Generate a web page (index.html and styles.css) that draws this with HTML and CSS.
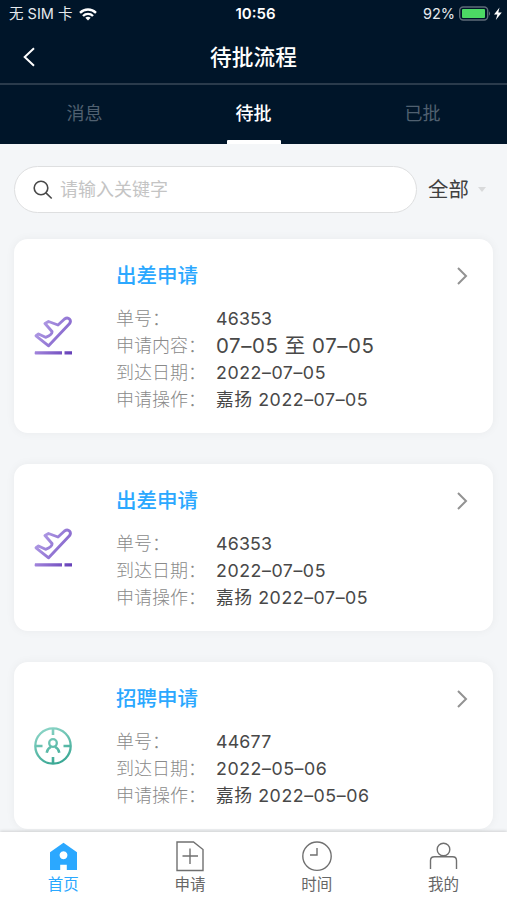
FILE: index.html
```
<!DOCTYPE html>
<html lang="zh-CN">
<head>
    <meta charset="UTF-8">
    <meta name="viewport" content="width=device-width, initial-scale=1.0">
    <title>待批流程</title>
    <link rel="stylesheet" href="styles.css">
</head>
<body>
    <!-- shared gradients and icons -->
    <svg class="defs" width="0" height="0">
        <defs>
            <linearGradient id="purple" x1="0" y1="0" x2="1" y2="0.6">
                <stop offset="0" stop-color="#baa8ea"/>
                <stop offset="1" stop-color="#8362cb"/>
            </linearGradient>
            <linearGradient id="purple-line" gradientUnits="userSpaceOnUse" x1="0" y1="0" x2="38" y2="0">
                <stop offset="0" stop-color="#a285dc"/>
                <stop offset="1" stop-color="#6540b8"/>
            </linearGradient>
            <linearGradient id="green" gradientUnits="userSpaceOnUse" x1="10" y1="0" x2="24" y2="38">
                <stop offset="0" stop-color="#8ed6c8"/>
                <stop offset="1" stop-color="#37a692"/>
            </linearGradient>
            <symbol id="plane" viewBox="0 0 38 40">
                <path d="M2 19.8 L4.5 18 L11.5 21.3 Q18.5 18.5 18 15.5 L11 7.5 L14.5 5.5 L24 9 L30.5 3 C34.5 .2 38 4.4 35.4 7.8 L14.6 29.8 Z" fill="none" stroke="url(#purple)" stroke-width="2.9" stroke-linejoin="round"/>
                <path d="M1 35.2h27v3.2H1.5Q0 38.4 1 35.2z M30.5 35.2h7.5v3.2h-7.5z" fill="url(#purple-line)"/>
            </symbol>
            <symbol id="target" viewBox="0 0 38 38">
                <g fill="none" stroke="url(#green)" stroke-width="2.3">
                    <circle cx="19" cy="19" r="17.7"/>
                    <path d="M19 2v6 M19 30v6 M2 19.01h6.5 M29.5 19.01h6.5" stroke-width="2.6"/>
                    <circle cx="19" cy="16" r="3.8"/>
                    <path d="M12.7 25.7c.6-3 2.3-5 4.5-6 M25.3 25.7c-.6-3-2.3-5-4.5-6" stroke-width="2.5"/>
                </g>
            </symbol>
        </defs>
    </svg>

    <div class="app">
        <header class="header">
            <div class="status-bar">
                <div class="status-left">
                    <span>无 SIM 卡</span>
                    <svg width="18" height="13" viewBox="0 0 18 13" fill="none" stroke="#fff" stroke-width="2.4">
                        <path d="M1 4.8C5.5.4 12.5.4 17 4.8"/>
                        <path d="M4 8C6.8 5.2 11.2 5.2 14 8"/>
                        <path d="M6.3 9.7Q9 7.7 11.7 9.7L9 12.6z" fill="#fff" stroke="none"/>
                    </svg>
                </div>
                <div class="status-time">10:56</div>
                <div class="status-right">
                    <span>92%</span>
                    <svg width="43" height="16" viewBox="0 0 43 16">
                        <rect x="0.7" y="1" width="28" height="13" rx="3.5" fill="none" stroke="#5d6b78" stroke-width="1.4"/>
                        <rect x="3" y="3" width="23" height="9" rx="1" fill="#4cd964"/>
                        <path d="M30 5.2q2.2 2.3 0 4.6z" fill="#5d6b78"/>
                        <path d="M40.5 1.5L35 8.4h3.4L36.8 14l6-7.4h-3.5z" fill="#fff"/>
                    </svg>
                </div>
            </div>
            <div class="nav-bar">
                <svg class="back" width="14" height="20" viewBox="0 0 14 20" fill="none" stroke="#fff" stroke-width="2">
                    <path d="M12 1.2L2.7 10L12 18.8"/>
                </svg>
                <h1>待批流程</h1>
            </div>
            <div class="tabs">
                <div class="tab">消息</div>
                <div class="tab active">待批</div>
                <div class="tab">已批</div>
            </div>
        </header>

        <main class="content">
            <div class="search-row">
                <div class="search-box">
                    <svg width="20" height="20" viewBox="0 0 20 20" fill="none" stroke="#484848" stroke-width="1.6">
                        <circle cx="8" cy="8" r="6.8"/>
                        <path d="M12.7 12.7l6 5.8"/>
                    </svg>
                    <span>请输入关键字</span>
                </div>
                <div class="filter">全部<i class="caret"></i></div>
            </div>

            <div class="card">
                <svg class="card-icon" width="38" height="40"><use href="#plane"/></svg>
                <div class="card-body">
                    <h2>出差申请</h2>
                    <div class="row"><span class="label">单号：</span><span class="value">46353</span></div>
                    <div class="row"><span class="label">申请内容：</span><span class="value large">07–05 至 07–05</span></div>
                    <div class="row"><span class="label">到达日期：</span><span class="value date">2022–07–05</span></div>
                    <div class="row"><span class="label">申请操作：</span><span class="value date">嘉扬 2022–07–05</span></div>
                </div>
                <svg class="arrow" width="12" height="20" viewBox="0 0 12 20"><path d="M2 2l8 8-8 8"/></svg>
            </div>

            <div class="card">
                <svg class="card-icon" width="38" height="40"><use href="#plane"/></svg>
                <div class="card-body">
                    <h2>出差申请</h2>
                    <div class="row"><span class="label">单号：</span><span class="value">46353</span></div>
                    <div class="row"><span class="label">到达日期：</span><span class="value date">2022–07–05</span></div>
                    <div class="row"><span class="label">申请操作：</span><span class="value date">嘉扬 2022–07–05</span></div>
                </div>
                <svg class="arrow" width="12" height="20" viewBox="0 0 12 20"><path d="M2 2l8 8-8 8"/></svg>
            </div>

            <div class="card">
                <svg class="card-icon" width="38" height="38"><use href="#target"/></svg>
                <div class="card-body">
                    <h2>招聘申请</h2>
                    <div class="row"><span class="label">单号：</span><span class="value">44677</span></div>
                    <div class="row"><span class="label">到达日期：</span><span class="value date">2022–05–06</span></div>
                    <div class="row"><span class="label">申请操作：</span><span class="value date">嘉扬 2022–05–06</span></div>
                </div>
                <svg class="arrow" width="12" height="20" viewBox="0 0 12 20"><path d="M2 2l8 8-8 8"/></svg>
            </div>
        </main>

        <nav class="tab-bar">
            <a class="tab-item active">
                <svg width="30" height="32" viewBox="0 0 30 32">
                    <path fill-rule="evenodd" d="M15.5 1.8L29 11.3V29H18.8V23.7H12.2V29H2V11.3zM15.5 10.2a4 4 0 1 0 .01 0z" fill="#2ba8ff"/>
                </svg>
                <span>首页</span>
            </a>
            <a class="tab-item">
                <svg class="line" width="30" height="32" viewBox="0 0 30 32">
                    <path d="M2 1H18.5L28 8.5V29.5H2z M15 7.5V23 M7.5 15H23"/>
                </svg>
                <span>申请</span>
            </a>
            <a class="tab-item">
                <svg class="line" width="30" height="32" viewBox="0 0 30 32">
                    <circle cx="15" cy="15.2" r="14.2"/>
                    <path d="M15 7V14H8"/>
                </svg>
                <span>时间</span>
            </a>
            <a class="tab-item">
                <svg class="line" width="30" height="32" viewBox="0 0 30 32">
                    <circle cx="14.5" cy="8.5" r="6.3"/>
                    <path d="M1.5 28V19.5Q1.5 15.8 5.5 15.8H23.5Q27.5 15.8 27.5 19.5V28"/>
                </svg>
                <span>我的</span>
            </a>
        </nav>
    </div>
</body>
</html>
```
FILE: styles.css
```
* {
    margin: 0;
    padding: 0;
    box-sizing: border-box;
}
body {
    font-family: Inter, "Noto Sans CJK SC", sans-serif;
    background-color: #f4f6f8;
    overflow: hidden;
}
svg {
    display: block;
    flex-shrink: 0;
}
.defs {
    position: absolute;
}
.app {
    height: 900px;
    display: flex;
    flex-direction: column;
}
.header {
    height: 144px;
    flex-shrink: 0;
    background-color: #001529;
    color: #fff;
}
.status-bar {
    height: 28px;
    display: grid;
    grid-template-columns: 1fr 60px 1fr;
    align-items: center;
    padding: 0 5px 0 9px;
    font-size: 14.5px;
    line-height: 28px;
    color: #e6eaee;
}
.status-left, .status-right {
    display: flex;
    align-items: center;
    gap: 7px;
}
.status-right {
    justify-content: flex-end;
    gap: 4px;
}
.status-time {
    text-align: center;
    font-weight: 600;
    font-size: 15px;
    color: #fff;
}
.nav-bar {
    height: 57px;
    display: grid;
    grid-template-columns: 60px 1fr 60px;
    align-items: center;
    padding-top: 3px;
    border-bottom: 2px solid #2a3b4c;
}
.back {
    margin-left: 22px;
}
.nav-bar h1 {
    font-size: 21.7px;
    font-weight: 500;
    line-height: 51px;
    text-align: center;
}
.tabs {
    height: 59px;
    display: grid;
    grid-template-columns: repeat(3, 1fr);
}
.tab {
    display: flex;
    flex-direction: column;
    align-items: center;
    justify-content: space-between;
    padding-top: 3px;
    font-size: 18px;
    line-height: 52px;
    color: #506070;
}
.tab.active {
    color: #fff;
    font-weight: 500;
}
.tab.active::after {
    content: "";
    width: 54px;
    height: 4px;
    border-radius: 1px 1px 0 0;
    background-color: #fff;
}
.content {
    flex: 1;
    min-height: 0;
    padding: 22px 14px 0;
    overflow: hidden;
}
.search-row {
    display: flex;
    align-items: center;
    margin-bottom: 26px;
}
.search-box {
    width: 403px;
    height: 47px;
    display: flex;
    align-items: center;
    gap: 7px;
    padding-left: 18px;
    border: 1px solid #dedfe0;
    border-radius: 24px;
    background-color: #fff;
    font-size: 18px;
    line-height: 26px;
    color: #c4c4c4;
}
.filter {
    display: flex;
    align-items: center;
    gap: 9px;
    margin-left: 11px;
    font-size: 20.4px;
    line-height: 47px;
    color: #404040;
}
.caret {
    border: 4px solid transparent;
    border-top: 5px solid #d9dadb;
    border-bottom: 0;
}
.card {
    display: flex;
    align-items: flex-start;
    margin-bottom: 31px;
    padding: 20px 25px 20px 20px;
    border-radius: 14px;
    background-color: #fff;
    box-shadow: 0 0 10px rgba(0, 0, 0, 0.05);
}
.card-icon {
    align-self: center;
}
.card-body {
    flex: 1;
    margin-left: 44px;
}
.card h2 {
    height: 33px;
    margin-bottom: 13px;
    font-size: 20.5px;
    font-weight: 500;
    line-height: 34px;
    color: #2ba8ff;
}
.card .row {
    display: flex;
    height: 27px;
    line-height: 27px;
    font-size: 18px;
}
.label {
    width: 100px;
    color: #8a8a8a;
    font-weight: 300;
    white-space: nowrap;
}
.value {
    color: #484848;
    font-size: 17.8px;
    letter-spacing: 0.2px;
}
.value.date {
    letter-spacing: 0.55px;
}
.value.large {
    font-size: 20.4px;
    letter-spacing: 0.6px;
    line-height: 28px;
}
.arrow {
    margin-top: 7px;
    fill: none;
    stroke: #929292;
    stroke-width: 2;
}
.tab-bar {
    height: 68px;
    flex-shrink: 0;
    display: grid;
    grid-template-columns: repeat(4, 1fr);
    background-color: #fff;
    box-shadow: 0 -1px 3px rgba(0, 0, 0, 0.15);
    position: relative;
}
.tab-item {
    display: flex;
    flex-direction: column;
    align-items: center;
    padding-top: 9px;
    font-size: 15.5px;
    line-height: 23px;
    color: #666;
}
.tab-item.active {
    color: #2ba8ff;
}
.line {
    fill: none;
    stroke: #707070;
    stroke-width: 1.4;
}
```
